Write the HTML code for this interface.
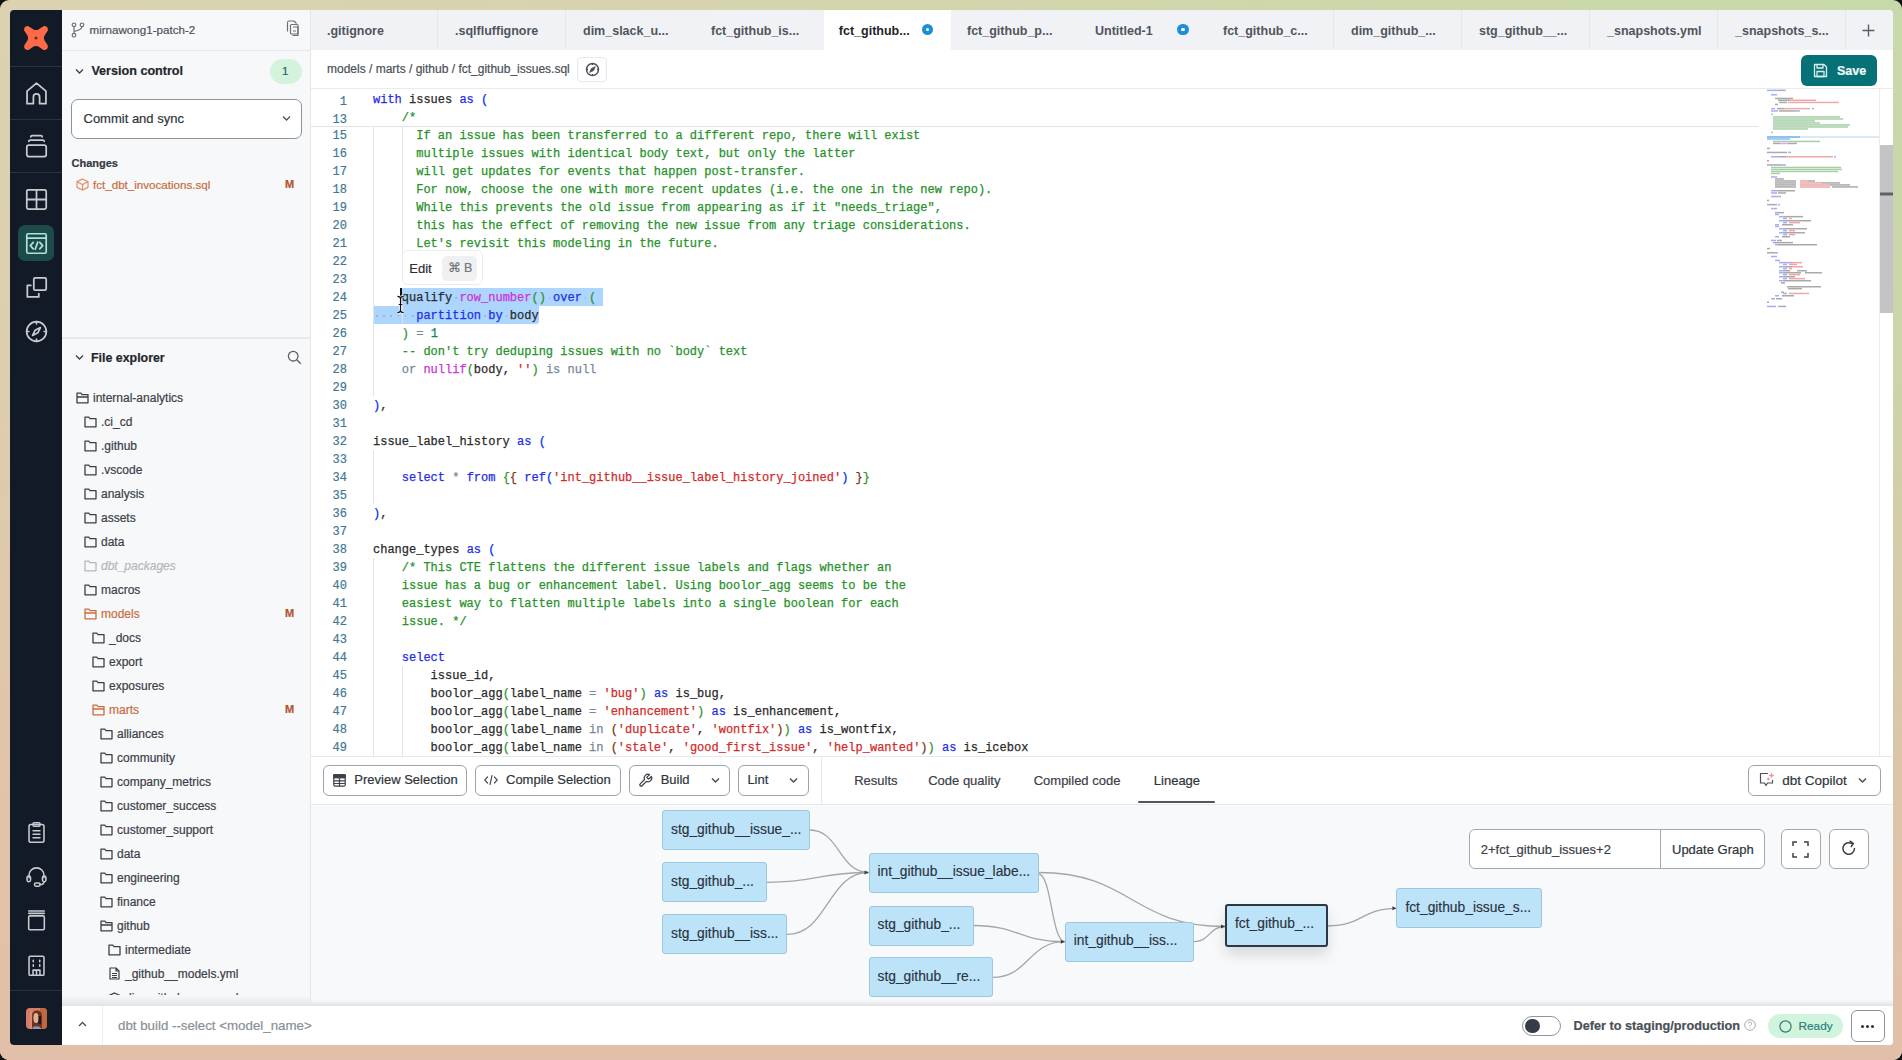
<!DOCTYPE html>
<html><head><meta charset="utf-8">
<style>
*{box-sizing:border-box;margin:0;padding:0}
html,body{width:1902px;height:1060px;overflow:hidden;background:#111}
body{font-family:"Liberation Sans",sans-serif;position:relative}
#bg{position:absolute;left:0;top:0;width:1902px;height:1060px;border-radius:9px;background:linear-gradient(90deg,#dbd2b1 0%,#d3d5ad 50%,#c7d9ab 100%)}
#bg2{position:absolute;left:0;top:0;width:1902px;height:1060px;border-radius:9px;background:linear-gradient(180deg,rgba(226,191,169,0) 0%,rgba(226,191,169,0.15) 30%,rgba(226,191,169,0.75) 70%,rgba(226,191,169,1) 100%)}
#win{position:absolute;left:10px;top:10px;width:1883px;height:1035px;border-radius:4px;overflow:hidden;background:#fff}
.abs{position:absolute}
#nav{left:0;top:0;width:52px;height:1035px;background:#121a27}
.navsep{position:absolute;left:0;width:52px;height:1px;background:#283241}
.nicon{position:absolute;left:12.5px;width:27px;height:27px}
#lp{left:52px;top:0;width:248px;height:995px;background:#f7f8fa}
.t{position:absolute;white-space:pre;line-height:1;-webkit-text-stroke:0.2px currentColor}
#tabs{left:300px;top:0;width:1583px;height:41px;background:#f1f2f5;border-bottom:1px solid #e6e8eb}
.tab{position:absolute;top:0;width:128px;height:40px;font-weight:bold;font-size:12.5px;color:#50555d}
.tab span{position:absolute;left:17px;top:13.5px;white-space:pre}
#crumb{left:300px;top:40px;width:1583px;height:39px;background:#fff;border-bottom:1px solid #e9ebee}
#editor{left:300px;top:79px;width:1583px;height:667px;background:#fff;overflow:hidden}
.ln{position:absolute;left:0;width:37px;text-align:right;font:12px/18px "Liberation Mono",monospace;color:#3f7896;-webkit-text-stroke:0.2px currentColor;margin-top:1px}
.cl{position:absolute;left:63px;font:12px/18px "Liberation Mono",monospace;white-space:pre;color:#2a2a2a;-webkit-text-stroke:0.25px currentColor;margin-top:1px}
.k{color:#1f2ee6}.c{color:#27922a}.o{color:#778899}.p{color:#cc33d6}.s{color:#d12b2b}.n{color:#098658}
.b1{color:#0431fa}.b2{color:#319331}.b3{color:#7b3814}
#tool{z-index:2;left:300px;top:746px;width:1583px;height:49px;background:#fff;border-top:1px solid #e6e8eb;border-bottom:1px solid #e6e8eb}
.btn{position:absolute;top:7.5px;height:31.5px;border:1.5px solid #9ea3aa;border-radius:6px;background:#fff;font-size:13px;color:#2f343b}
#graph{left:300px;top:794px;width:1583px;height:201px;background:#f8f9fb}
.node{position:absolute;height:40px;background:#bde3f8;border:1px solid #9dc6df;border-radius:3px;font-size:13.8px;color:#2a3340}
.node span{position:absolute;left:8px;top:10.5px;white-space:pre;-webkit-text-stroke:0.15px currentColor}
#status{left:52px;top:995px;width:1831px;height:40px;background:#fff;border-top:1px solid #e2e4e8}
</style></head><body>
<div id="bg"></div><div id="bg2"></div>
<div id="win">
 <!-- NAV -->
 <div id="nav" class="abs">
  <svg class="abs" style="left:13px;top:15px" width="26" height="26" viewBox="0 0 24 24"><path fill="#fd6a48" d="M22.1,1.9 C22.7,2.5 23,3.3 23,4.1 C23,4.7 22.8,5.3 22.5,5.8 L19.9,9.8 C19.5,10.5 19.3,11.2 19.3,12 C19.3,12.8 19.5,13.5 19.9,14.2 L22.5,18.2 C22.8,18.7 23,19.3 23,19.9 C23,20.7 22.7,21.5 22.1,22.1 C21.5,22.7 20.7,23 19.9,23 C19.3,23 18.7,22.8 18.2,22.5 L14.2,19.9 C13.5,19.5 12.8,19.3 12,19.3 C11.2,19.3 10.5,19.5 9.8,19.9 L5.8,22.5 C5.3,22.8 4.7,23 4.1,23 C3.3,23 2.5,22.7 1.9,22.1 C1.3,21.5 1,20.7 1,19.9 C1,19.3 1.2,18.7 1.5,18.2 L4.1,14.2 C4.5,13.5 4.7,12.8 4.7,12 C4.7,11.2 4.5,10.5 4.1,9.8 L1.5,5.8 C1.2,5.3 1,4.7 1,4.1 C1,3.3 1.3,2.5 1.9,1.9 C2.5,1.3 3.3,1 4.1,1 C4.7,1 5.3,1.2 5.8,1.5 L9.8,4.1 C10.5,4.5 11.2,4.7 12,4.7 C12.8,4.7 13.5,4.5 14.2,4.1 L18.2,1.5 C18.7,1.2 19.3,1 19.9,1 C20.7,1 21.5,1.3 22.1,1.9 Z"/><circle cx="12" cy="12" r="1.4" fill="#6b2a1a"/></svg>
  <div class="navsep" style="top:56px"></div>
  <div class="navsep" style="top:109px"></div>
  <div class="navsep" style="top:162px"></div>
  <div class="navsep" style="top:980px"></div>
  <svg class="nicon" style="top:69.5px" viewBox="0 0 20 20" fill="none" stroke="#c8cbd0" stroke-width="1.3" stroke-linejoin="round"><path d="M3,17.5 V8.2 L10,2.3 L17,8.2 V17.5 H12.3 V12.5 A2.3,2.3 0 0 0 7.7,12.5 V17.5 Z"/></svg>
  <svg class="nicon" style="top:122.5px" viewBox="0 0 20 20" fill="none" stroke="#c8cbd0" stroke-width="1.3" stroke-linecap="round"><rect x="2.8" y="9" width="14.4" height="8.5" rx="1.5"/><path d="M4.3,6.2 Q4.3,5.2 5.5,5.2 H14.5 Q15.7,5.2 15.7,6.2"/><path d="M5.8,2.8 Q5.8,1.9 6.8,1.9 H13.2 Q14.2,1.9 14.2,2.8"/></svg>
  <svg class="nicon" style="top:175.5px" viewBox="0 0 20 20" fill="none" stroke="#c8cbd0" stroke-width="1.3"><rect x="2.8" y="2.8" width="14.4" height="14.4" rx="1.2"/><path d="M10,2.8 V17.2 M2.8,10 H17.2"/></svg>
  <div class="abs" style="left:8px;top:215px;width:36px;height:36px;border-radius:7px;background:#1d4b4b"></div>
  <svg class="nicon" style="top:219.5px" viewBox="0 0 20 20" fill="none" stroke="#aee3dc" stroke-width="1.25" stroke-linecap="round" stroke-linejoin="round"><rect x="2.8" y="2.8" width="14.4" height="14.4" rx="1"/><path d="M2.8,6 H17.2"/><path d="M7.6,9.2 L5.4,11.6 L7.6,14 M12.4,9.2 L14.6,11.6 L12.4,14 M10.9,9 L9.1,14.2"/></svg>
  <svg class="nicon" style="top:263.5px" viewBox="0 0 20 20" fill="none" stroke="#c8cbd0" stroke-width="1.3" stroke-linecap="round" stroke-linejoin="round"><rect x="8" y="2.8" width="9.2" height="9.2" rx="1"/><path d="M5.8,8.5 H3.2 V17 H11.7 V14.6"/></svg>
  <svg class="nicon" style="top:307.5px" viewBox="0 0 20 20" fill="none" stroke="#c8cbd0" stroke-width="1.25" stroke-linecap="round" stroke-linejoin="round"><circle cx="10" cy="10" r="7.3"/><path d="M10,2.7 V4.3 M10,15.7 V17.3 M2.7,10 H4.3 M15.7,10 H17.3"/><path d="M12.9,7.1 L11,11 L7.1,12.9 L9,9 Z"/></svg>
  <svg class="nicon" style="top:810.5px;left:14.5px;width:23px;height:23px" viewBox="0 0 20 20" fill="none" stroke="#c8cbd0" stroke-width="1.35" stroke-linecap="round" stroke-linejoin="round"><rect x="3.5" y="3" width="13" height="15.5" rx="1.5"/><rect x="7" y="1.5" width="6" height="3" rx="0.8"/><path d="M7,8.5 H13 M7,11.5 H13 M7,14.5 H13"/></svg>
  <svg class="nicon" style="top:854.5px;left:14.5px;width:23px;height:23px" viewBox="0 0 20 20" fill="none" stroke="#c8cbd0" stroke-width="1.35" stroke-linecap="round" stroke-linejoin="round"><path d="M3.5,11 V9 A6.5,6.5 0 0 1 16.5,9 V11"/><rect x="1.8" y="9.5" width="3" height="5" rx="1.4"/><rect x="15.2" y="9.5" width="3" height="5" rx="1.4"/><path d="M16.5,14.5 Q16.5,17 13,17"/><rect x="8.2" y="15.6" width="5" height="2.8" rx="1.4"/></svg>
  <svg class="nicon" style="top:898.5px;left:14.5px;width:23px;height:23px" viewBox="0 0 20 20" fill="none" stroke="#c8cbd0" stroke-width="1.35" stroke-linecap="round" stroke-linejoin="round"><rect x="3.2" y="6" width="13.6" height="12" rx="1"/><path d="M3.2,3.8 H16.8 M3.2,1.8 H16.8"/></svg>
  <svg class="nicon" style="top:943.5px;left:14.5px;width:23px;height:23px" viewBox="0 0 20 20" fill="none" stroke="#c8cbd0" stroke-width="1.35" stroke-linecap="round" stroke-linejoin="round"><rect x="3.5" y="2" width="13" height="16.5" rx="1"/><path d="M7.2,5.5 V6.8 M12.8,5.5 V6.8 M7.2,9.3 V10.6 M12.8,9.3 V10.6"/><path d="M7,18.5 V14 H13 V18.5 M10,14 V18.5"/></svg>
  <svg class="abs" style="left:15.7px;top:998.2px" width="21" height="21" viewBox="0 0 21 21"><defs><clipPath id="avc"><rect x="0" y="0" width="21" height="21" rx="4"/></clipPath></defs><g clip-path="url(#avc)">
<rect width="21" height="21" fill="#d47e66"/><rect x="14" width="7" height="21" fill="#c2683e"/>
<path d="M6,21 V8 Q6,2.5 11,2.5 Q16,2.5 16,8 V21 Z" fill="#6a3422"/>
<ellipse cx="10" cy="10" rx="2.6" ry="5" fill="#e3b192"/>
<rect x="12.6" y="8" width="2.4" height="8" fill="#1c1a26"/>
<path d="M6,21 Q7,17.5 10,18.5 Q13,17.5 16,21 Z" fill="#8e9aa8"/>
<rect x="4" y="2" width="2" height="19" fill="#e08a74"/>
</g></svg>
 </div>
 <!-- LEFT PANEL -->
 <div id="lp" class="abs">
  <div class="abs" style="left:0;top:0;width:248px;height:41px;border-bottom:1px solid #e6e8eb"></div>
  <svg class="abs" style="left:9px;top:12px" width="14" height="16" viewBox="0 0 14 16" fill="none" stroke="#6b7079" stroke-width="1.2"><circle cx="3" cy="2.8" r="1.8"/><circle cx="3" cy="13.2" r="1.8"/><circle cx="11" cy="2.8" r="1.8"/><path d="M3,4.6 V11.4 M11,4.6 Q11,8 3,9.5"/></svg>
  <div class="t" style="left:27.5px;top:13.5px;font-size:11.6px;color:#4d525a">mirnawong1-patch-2</div>
  <svg class="abs" style="left:224px;top:10px" width="16" height="17" viewBox="0 0 16 17" fill="none" stroke="#6b7079" stroke-width="1.2" stroke-linejoin="round"><path d="M1.5,2.5 Q1.5,1 3,1 H8 L10.5,3.5"/><path d="M1.5,2.5 V11.5"/><rect x="4.5" y="4.5" width="7.5" height="9.5" rx="1"/><path d="M7,7 H12 V15.5 H6.5"/><path d="M7,11 H10"/></svg>
  <svg class="abs" style="left:13px;top:58px" width="9" height="7" viewBox="0 0 9 7" fill="none" stroke="#3b4048" stroke-width="1.3"><path d="M1,1.5 L4.5,5 L8,1.5"/></svg>
  <div class="t" style="left:29.4px;top:55px;font-size:12.6px;font-weight:bold;color:#23272d">Version control</div>
  <div class="abs" style="left:207.5px;top:48.5px;width:32.5px;height:25px;border-radius:13px;background:#d3f3dd"></div>
  <div class="t" style="left:220px;top:55.5px;font-size:11.5px;color:#26666a">1</div>
  <div class="abs" style="left:9px;top:88.5px;width:231px;height:40px;border:1.5px solid #8f949b;border-radius:7px;background:#fff"></div>
  <div class="t" style="left:21.5px;top:101.5px;font-size:13px;color:#30353c">Commit and sync</div>
  <svg class="abs" style="left:220px;top:105px" width="9" height="7" viewBox="0 0 9 7" fill="none" stroke="#4b5058" stroke-width="1.3"><path d="M1,1.5 L4.5,5 L8,1.5"/></svg>
  <div class="t" style="left:9.5px;top:147.5px;font-size:11px;font-weight:bold;color:#353a41">Changes</div>
  <svg class="abs" style="left:14px;top:168px" width="13" height="13" viewBox="0 0 13 13" fill="none" stroke="#e29063" stroke-width="1.2"><path d="M6.5,1 L12,3.7 V9.3 L6.5,12 L1,9.3 V3.7 Z M1,3.7 L6.5,6.5 L12,3.7 M6.5,6.5 V12"/></svg>
  <div class="t" style="left:31px;top:168.5px;font-size:11.6px;color:#c96c3e">fct_dbt_invocations.sql</div>
  <div class="t" style="left:223px;top:169px;font-size:11px;font-weight:bold;color:#b5532a">M</div>
  <div class="abs" style="left:0;top:327px;width:248px;height:1.5px;background:#e8eaed"></div>
  <svg class="abs" style="left:13px;top:344px" width="9" height="7" viewBox="0 0 9 7" fill="none" stroke="#3b4048" stroke-width="1.3"><path d="M1,1.5 L4.5,5 L8,1.5"/></svg>
  <div class="t" style="left:29px;top:341.5px;font-size:12.4px;font-weight:bold;color:#23272d">File explorer</div>
  <svg class="abs" style="left:225px;top:340px" width="15" height="15" viewBox="0 0 15 15" fill="none" stroke="#5b6068" stroke-width="1.3"><circle cx="6.2" cy="6.2" r="4.8"/><path d="M9.7,9.7 L13.8,13.8"/></svg>
  <div class="abs" style="left:0;top:0;width:248px;height:984.5px;overflow:hidden">
<svg class="abs" style="left:13.5px;top:382px" width="13" height="12" viewBox="0 0 13 12" fill="none" stroke="#3b4048" stroke-width="1.3" stroke-linejoin="round"><path d="M1,1.2 H4.8 L6,2.6 H12 V10.8 H1 Z M1,5 H12"/></svg>
<div class="t" style="left:31px;top:381.5px;font-size:12px;color:#3b4048;">internal-analytics</div>
<svg class="abs" style="left:21.5px;top:406px" width="13" height="12" viewBox="0 0 13 12" fill="none" stroke="#3b4048" stroke-width="1.3" stroke-linejoin="round"><path d="M1,1.2 H4.8 L6,2.6 H12 V10.8 H1 Z"/></svg>
<div class="t" style="left:39px;top:405.5px;font-size:12px;color:#3b4048;">.ci_cd</div>
<svg class="abs" style="left:21.5px;top:430px" width="13" height="12" viewBox="0 0 13 12" fill="none" stroke="#3b4048" stroke-width="1.3" stroke-linejoin="round"><path d="M1,1.2 H4.8 L6,2.6 H12 V10.8 H1 Z"/></svg>
<div class="t" style="left:39px;top:429.5px;font-size:12px;color:#3b4048;">.github</div>
<svg class="abs" style="left:21.5px;top:454px" width="13" height="12" viewBox="0 0 13 12" fill="none" stroke="#3b4048" stroke-width="1.3" stroke-linejoin="round"><path d="M1,1.2 H4.8 L6,2.6 H12 V10.8 H1 Z"/></svg>
<div class="t" style="left:39px;top:453.5px;font-size:12px;color:#3b4048;">.vscode</div>
<svg class="abs" style="left:21.5px;top:478px" width="13" height="12" viewBox="0 0 13 12" fill="none" stroke="#3b4048" stroke-width="1.3" stroke-linejoin="round"><path d="M1,1.2 H4.8 L6,2.6 H12 V10.8 H1 Z"/></svg>
<div class="t" style="left:39px;top:477.5px;font-size:12px;color:#3b4048;">analysis</div>
<svg class="abs" style="left:21.5px;top:502px" width="13" height="12" viewBox="0 0 13 12" fill="none" stroke="#3b4048" stroke-width="1.3" stroke-linejoin="round"><path d="M1,1.2 H4.8 L6,2.6 H12 V10.8 H1 Z"/></svg>
<div class="t" style="left:39px;top:501.5px;font-size:12px;color:#3b4048;">assets</div>
<svg class="abs" style="left:21.5px;top:526px" width="13" height="12" viewBox="0 0 13 12" fill="none" stroke="#3b4048" stroke-width="1.3" stroke-linejoin="round"><path d="M1,1.2 H4.8 L6,2.6 H12 V10.8 H1 Z"/></svg>
<div class="t" style="left:39px;top:525.5px;font-size:12px;color:#3b4048;">data</div>
<svg class="abs" style="left:21.5px;top:550px" width="13" height="12" viewBox="0 0 13 12" fill="none" stroke="#b3b7bd" stroke-width="1.3" stroke-linejoin="round"><path d="M1,1.2 H4.8 L6,2.6 H12 V10.8 H1 Z"/></svg>
<div class="t" style="left:39px;top:549.5px;font-size:12px;color:#b3b7bd;font-style:italic;">dbt_packages</div>
<svg class="abs" style="left:21.5px;top:574px" width="13" height="12" viewBox="0 0 13 12" fill="none" stroke="#3b4048" stroke-width="1.3" stroke-linejoin="round"><path d="M1,1.2 H4.8 L6,2.6 H12 V10.8 H1 Z"/></svg>
<div class="t" style="left:39px;top:573.5px;font-size:12px;color:#3b4048;">macros</div>
<svg class="abs" style="left:21.5px;top:598px" width="13" height="12" viewBox="0 0 13 12" fill="none" stroke="#c96c3e" stroke-width="1.3" stroke-linejoin="round"><path d="M1,1.2 H4.8 L6,2.6 H12 V10.8 H1 Z M1,5 H12"/></svg>
<div class="t" style="left:39px;top:597.5px;font-size:12px;color:#c96c3e;">models</div>
<div class="t" style="left:223px;top:598px;font-size:11px;font-weight:bold;color:#b5532a">M</div>
<svg class="abs" style="left:29.5px;top:622px" width="13" height="12" viewBox="0 0 13 12" fill="none" stroke="#3b4048" stroke-width="1.3" stroke-linejoin="round"><path d="M1,1.2 H4.8 L6,2.6 H12 V10.8 H1 Z"/></svg>
<div class="t" style="left:47px;top:621.5px;font-size:12px;color:#3b4048;">_docs</div>
<svg class="abs" style="left:29.5px;top:646px" width="13" height="12" viewBox="0 0 13 12" fill="none" stroke="#3b4048" stroke-width="1.3" stroke-linejoin="round"><path d="M1,1.2 H4.8 L6,2.6 H12 V10.8 H1 Z"/></svg>
<div class="t" style="left:47px;top:645.5px;font-size:12px;color:#3b4048;">export</div>
<svg class="abs" style="left:29.5px;top:670px" width="13" height="12" viewBox="0 0 13 12" fill="none" stroke="#3b4048" stroke-width="1.3" stroke-linejoin="round"><path d="M1,1.2 H4.8 L6,2.6 H12 V10.8 H1 Z"/></svg>
<div class="t" style="left:47px;top:669.5px;font-size:12px;color:#3b4048;">exposures</div>
<svg class="abs" style="left:29.5px;top:694px" width="13" height="12" viewBox="0 0 13 12" fill="none" stroke="#c96c3e" stroke-width="1.3" stroke-linejoin="round"><path d="M1,1.2 H4.8 L6,2.6 H12 V10.8 H1 Z M1,5 H12"/></svg>
<div class="t" style="left:47px;top:693.5px;font-size:12px;color:#c96c3e;">marts</div>
<div class="t" style="left:223px;top:694px;font-size:11px;font-weight:bold;color:#b5532a">M</div>
<svg class="abs" style="left:37.5px;top:718px" width="13" height="12" viewBox="0 0 13 12" fill="none" stroke="#3b4048" stroke-width="1.3" stroke-linejoin="round"><path d="M1,1.2 H4.8 L6,2.6 H12 V10.8 H1 Z"/></svg>
<div class="t" style="left:55px;top:717.5px;font-size:12px;color:#3b4048;">alliances</div>
<svg class="abs" style="left:37.5px;top:742px" width="13" height="12" viewBox="0 0 13 12" fill="none" stroke="#3b4048" stroke-width="1.3" stroke-linejoin="round"><path d="M1,1.2 H4.8 L6,2.6 H12 V10.8 H1 Z"/></svg>
<div class="t" style="left:55px;top:741.5px;font-size:12px;color:#3b4048;">community</div>
<svg class="abs" style="left:37.5px;top:766px" width="13" height="12" viewBox="0 0 13 12" fill="none" stroke="#3b4048" stroke-width="1.3" stroke-linejoin="round"><path d="M1,1.2 H4.8 L6,2.6 H12 V10.8 H1 Z"/></svg>
<div class="t" style="left:55px;top:765.5px;font-size:12px;color:#3b4048;">company_metrics</div>
<svg class="abs" style="left:37.5px;top:790px" width="13" height="12" viewBox="0 0 13 12" fill="none" stroke="#3b4048" stroke-width="1.3" stroke-linejoin="round"><path d="M1,1.2 H4.8 L6,2.6 H12 V10.8 H1 Z"/></svg>
<div class="t" style="left:55px;top:789.5px;font-size:12px;color:#3b4048;">customer_success</div>
<svg class="abs" style="left:37.5px;top:814px" width="13" height="12" viewBox="0 0 13 12" fill="none" stroke="#3b4048" stroke-width="1.3" stroke-linejoin="round"><path d="M1,1.2 H4.8 L6,2.6 H12 V10.8 H1 Z"/></svg>
<div class="t" style="left:55px;top:813.5px;font-size:12px;color:#3b4048;">customer_support</div>
<svg class="abs" style="left:37.5px;top:838px" width="13" height="12" viewBox="0 0 13 12" fill="none" stroke="#3b4048" stroke-width="1.3" stroke-linejoin="round"><path d="M1,1.2 H4.8 L6,2.6 H12 V10.8 H1 Z"/></svg>
<div class="t" style="left:55px;top:837.5px;font-size:12px;color:#3b4048;">data</div>
<svg class="abs" style="left:37.5px;top:862px" width="13" height="12" viewBox="0 0 13 12" fill="none" stroke="#3b4048" stroke-width="1.3" stroke-linejoin="round"><path d="M1,1.2 H4.8 L6,2.6 H12 V10.8 H1 Z"/></svg>
<div class="t" style="left:55px;top:861.5px;font-size:12px;color:#3b4048;">engineering</div>
<svg class="abs" style="left:37.5px;top:886px" width="13" height="12" viewBox="0 0 13 12" fill="none" stroke="#3b4048" stroke-width="1.3" stroke-linejoin="round"><path d="M1,1.2 H4.8 L6,2.6 H12 V10.8 H1 Z"/></svg>
<div class="t" style="left:55px;top:885.5px;font-size:12px;color:#3b4048;">finance</div>
<svg class="abs" style="left:37.5px;top:910px" width="13" height="12" viewBox="0 0 13 12" fill="none" stroke="#3b4048" stroke-width="1.3" stroke-linejoin="round"><path d="M1,1.2 H4.8 L6,2.6 H12 V10.8 H1 Z M1,5 H12"/></svg>
<div class="t" style="left:55px;top:909.5px;font-size:12px;color:#3b4048;">github</div>
<svg class="abs" style="left:45.5px;top:934px" width="13" height="12" viewBox="0 0 13 12" fill="none" stroke="#3b4048" stroke-width="1.3" stroke-linejoin="round"><path d="M1,1.2 H4.8 L6,2.6 H12 V10.8 H1 Z"/></svg>
<div class="t" style="left:63px;top:933.5px;font-size:12px;color:#3b4048;">intermediate</div>
<svg class="abs" style="left:46.5px;top:957px" width="11" height="13" viewBox="0 0 11 13" fill="none" stroke="#3b4048" stroke-width="1.2" stroke-linejoin="round"><path d="M1,1 H7 L10,4 V12 H1 Z M7,1 V4 H10"/><path d="M3,6.5 H8 M3,8.5 H8 M3,10.5 H8" stroke-width="1"/></svg>
<div class="t" style="left:63px;top:957.5px;font-size:12px;color:#3b4048;">_github__models.yml</div>
<svg class="abs" style="left:45.5px;top:982px" width="13" height="12" viewBox="0 0 13 12" fill="none" stroke="#3b4048" stroke-width="1.3"><path d="M6.5,1 L12,3.5 V8.5 L6.5,11 L1,8.5 V3.5 Z M1,3.5 L6.5,6 L12,3.5 M6.5,6 V11"/></svg>
<div class="t" style="left:63px;top:981.5px;font-size:12px;color:#3b4048;">dim_github_users.sql</div>
  </div>
  <div class="abs" style="left:0;top:985.5px;width:248px;height:9.5px;background:linear-gradient(#f7f8fa,#e3e5e9)"></div>
 </div>
 <!-- TABS -->
 <div id="tabs" class="abs"><div class="abs" style="left:127px;top:0;width:1px;height:40px;background:#e4e6ea"></div><div class="abs" style="left:255px;top:0;width:1px;height:40px;background:#e4e6ea"></div><div class="abs" style="left:1023px;top:0;width:1px;height:40px;background:#e4e6ea"></div><div class="abs" style="left:1151px;top:0;width:1px;height:40px;background:#e4e6ea"></div><div class="abs" style="left:1279px;top:0;width:1px;height:40px;background:#e4e6ea"></div><div class="abs" style="left:1407px;top:0;width:1px;height:40px;background:#e4e6ea"></div><div class="abs" style="left:1535px;top:0;width:1px;height:40px;background:#e4e6ea"></div><div class="tab" style="left:0px"><span>.gitignore</span></div>
<div class="tab" style="left:128px"><span>.sqlfluffignore</span></div>
<div class="tab" style="left:256px"><span>dim_slack_u...</span></div>
<div class="tab" style="left:384px"><span>fct_github_is...</span></div>
<div class="tab" style="left:514px;width:127px;background:#fff;color:#1f2329;height:41px"><span style="left:14.8px">fct_github...</span></div>
<div class="tab" style="left:640px"><span>fct_github_p...</span></div>
<div class="tab" style="left:768px"><span>Untitled-1</span></div>
<div class="tab" style="left:896px"><span>fct_github_c...</span></div>
<div class="tab" style="left:1024px"><span>dim_github_...</span></div>
<div class="tab" style="left:1152px"><span>stg_github__...</span></div>
<div class="tab" style="left:1280px"><span>_snapshots.yml</span></div>
<div class="tab" style="left:1408px"><span>_snapshots_s...</span></div>
<div class="abs" style="left:611.5px;top:13.5px;width:11.5px;height:11.5px;border-radius:50%;border:4px solid #1d8fd6;background:#fff"></div>
<div class="abs" style="left:867.2px;top:13.5px;width:11.5px;height:11.5px;border-radius:50%;border:4px solid #1d8fd6;background:#fff"></div>
<svg class="abs" style="left:1552px;top:14px" width="13" height="13" viewBox="0 0 13 13" stroke="#5a5f67" stroke-width="1.4"><path d="M6.5,0.5 V12.5 M0.5,6.5 H12.5"/></svg>
 </div>
 <div id="crumb" class="abs">
  <div class="t" style="left:17px;top:13px;font-size:12px;color:#4a4f57">models / marts / github / fct_github_issues.sql</div>
  <div class="abs" style="left:267px;top:7px;width:30px;height:25px;border:1px solid #e6e8eb;border-radius:4px;background:#fff"></div>
  <svg class="abs" style="left:275px;top:12px" width="15" height="15" viewBox="0 0 15 15" fill="none" stroke="#4d525a" stroke-width="1.5"><circle cx="7.5" cy="7.5" r="6"/><path d="M7.5,1.5 V3 M7.5,12 V13.5 M1.5,7.5 H3 M12,7.5 H13.5" stroke-width="1.3"/><path d="M10.3,4.7 L8.6,8.6 L4.7,10.3 L6.4,6.4 Z" fill="#4d525a" stroke-width="0.8"/></svg>
  <div class="abs" style="left:1491px;top:4.5px;width:76px;height:31.5px;border-radius:6px;background:#067277"></div>
  <svg class="abs" style="left:1503px;top:12.5px" width="15" height="15" viewBox="0 0 15 15" fill="none" stroke="#d9f0ef" stroke-width="1.3" stroke-linejoin="round"><path d="M1.5,1.5 H11 L13.5,4 V13.5 H1.5 Z"/><path d="M4,1.5 V5 H10 V1.5"/><rect x="4" y="8.5" width="7" height="5"/></svg>
  <div class="t" style="left:1527px;top:14.5px;font-size:12.5px;font-weight:bold;color:#f2fbfb">Save</div>
 </div>
 <div id="editor" class="abs">
<div class="abs" style="left:90.8px;top:199px;width:202.6px;height:18px;background:#add6ff"></div>
<div class="abs" style="left:63.0px;top:217px;width:165.6px;height:18px;background:#add6ff;border-radius:0 0 3px 0"></div>
<div class="abs" style="left:63.0px;top:37px;width:1px;height:270px;background:#e3e3e3"></div>
<div class="abs" style="left:91.8px;top:37px;width:1px;height:144px;background:#e3e3e3"></div>
<div class="abs" style="left:91.8px;top:217px;width:1px;height:18px;background:#e3e3e3"></div>
<div class="abs" style="left:63.0px;top:361px;width:1px;height:54px;background:#e3e3e3"></div>
<div class="abs" style="left:63.0px;top:469px;width:1px;height:198px;background:#e3e3e3"></div>
<div class="abs" style="left:91.8px;top:577px;width:1px;height:90px;background:#e3e3e3"></div>
<div class="abs" style="left:66.0px;top:226px;width:1.5px;height:1.5px;background:#9cb8d6"></div>
<div class="abs" style="left:73.2px;top:226px;width:1.5px;height:1.5px;background:#9cb8d6"></div>
<div class="abs" style="left:80.4px;top:226px;width:1.5px;height:1.5px;background:#9cb8d6"></div>
<div class="abs" style="left:87.6px;top:226px;width:1.5px;height:1.5px;background:#9cb8d6"></div>
<div class="abs" style="left:94.8px;top:226px;width:1.5px;height:1.5px;background:#9cb8d6"></div>
<div class="abs" style="left:102.0px;top:226px;width:1.5px;height:1.5px;background:#9cb8d6"></div>
<div class="abs" style="left:145.2px;top:208px;width:1.5px;height:1.5px;background:#9cb8d6"></div><div class="abs" style="left:238.8px;top:208px;width:1.5px;height:1.5px;background:#9cb8d6"></div><div class="abs" style="left:274.8px;top:208px;width:1.5px;height:1.5px;background:#9cb8d6"></div><div class="abs" style="left:174.0px;top:226px;width:1.5px;height:1.5px;background:#9cb8d6"></div><div class="abs" style="left:195.6px;top:226px;width:1.5px;height:1.5px;background:#9cb8d6"></div><div class="ln" style="top:37px">15</div>
<div class="cl" style="top:37px"><span class="c">      If an issue has been transferred to a different repo, there will exist</span></div>
<div class="ln" style="top:55px">16</div>
<div class="cl" style="top:55px"><span class="c">      multiple issues with identical body text, but only the latter</span></div>
<div class="ln" style="top:73px">17</div>
<div class="cl" style="top:73px"><span class="c">      will get updates for events that happen post-transfer.</span></div>
<div class="ln" style="top:91px">18</div>
<div class="cl" style="top:91px"><span class="c">      For now, choose the one with more recent updates (i.e. the one in the new repo).</span></div>
<div class="ln" style="top:109px">19</div>
<div class="cl" style="top:109px"><span class="c">      While this prevents the old issue from appearing as if it &quot;needs_triage&quot;,</span></div>
<div class="ln" style="top:127px">20</div>
<div class="cl" style="top:127px"><span class="c">      this has the effect of removing the new issue from any triage considerations.</span></div>
<div class="ln" style="top:145px">21</div>
<div class="cl" style="top:145px"><span class="c">      Let&#x27;s revisit this modeling in the future.</span></div>
<div class="ln" style="top:163px">22</div>
<div class="cl" style="top:163px"><span class="c">    */</span></div>
<div class="ln" style="top:181px">23</div>
<div class="ln" style="top:199px">24</div>
<div class="cl" style="top:199px">    qualify <span class="p">row_number</span><span class="b2">()</span> <span class="k">over</span> <span class="b2">(</span></div>
<div class="ln" style="top:217px">25</div>
<div class="cl" style="top:217px">      <span class="k">partition</span> <span class="k">by</span> body</div>
<div class="ln" style="top:235px">26</div>
<div class="cl" style="top:235px">    <span class="b2">)</span> <span class="o">=</span> <span class="n">1</span></div>
<div class="ln" style="top:253px">27</div>
<div class="cl" style="top:253px">    <span class="c">-- don&#x27;t try deduping issues with no `body` text</span></div>
<div class="ln" style="top:271px">28</div>
<div class="cl" style="top:271px">    <span class="o">or</span> <span class="p">nullif</span><span class="b2">(</span>body, <span class="s">&#x27;&#x27;</span><span class="b2">)</span> <span class="o">is</span> <span class="o">null</span></div>
<div class="ln" style="top:289px">29</div>
<div class="ln" style="top:307px">30</div>
<div class="cl" style="top:307px"><span class="b1">)</span>,</div>
<div class="ln" style="top:325px">31</div>
<div class="ln" style="top:343px">32</div>
<div class="cl" style="top:343px">issue_label_history <span class="k">as</span> <span class="b1">(</span></div>
<div class="ln" style="top:361px">33</div>
<div class="ln" style="top:379px">34</div>
<div class="cl" style="top:379px">    <span class="k">select</span> <span class="o">*</span> <span class="k">from</span> <span class="b2">{</span><span class="b3">{</span> <span class="k">ref</span><span class="b1">(</span><span class="s">&#x27;int_github__issue_label_history_joined&#x27;</span><span class="b1">)</span> <span class="b3">}</span><span class="b2">}</span></div>
<div class="ln" style="top:397px">35</div>
<div class="ln" style="top:415px">36</div>
<div class="cl" style="top:415px"><span class="b1">)</span>,</div>
<div class="ln" style="top:433px">37</div>
<div class="ln" style="top:451px">38</div>
<div class="cl" style="top:451px">change_types <span class="k">as</span> <span class="b1">(</span></div>
<div class="ln" style="top:469px">39</div>
<div class="cl" style="top:469px">    <span class="c">/* This CTE flattens the different issue labels and flags whether an</span></div>
<div class="ln" style="top:487px">40</div>
<div class="cl" style="top:487px">    <span class="c">issue has a bug or enhancement label. Using boolor_agg seems to be the</span></div>
<div class="ln" style="top:505px">41</div>
<div class="cl" style="top:505px">    <span class="c">easiest way to flatten multiple labels into a single boolean for each</span></div>
<div class="ln" style="top:523px">42</div>
<div class="cl" style="top:523px">    <span class="c">issue. */</span></div>
<div class="ln" style="top:541px">43</div>
<div class="ln" style="top:559px">44</div>
<div class="cl" style="top:559px">    <span class="k">select</span></div>
<div class="ln" style="top:577px">45</div>
<div class="cl" style="top:577px">        issue_id,</div>
<div class="ln" style="top:595px">46</div>
<div class="cl" style="top:595px">        boolor_agg<span class="b2">(</span>label_name <span class="o">=</span> <span class="s">&#x27;bug&#x27;</span><span class="b2">)</span> <span class="k">as</span> is_bug,</div>
<div class="ln" style="top:613px">47</div>
<div class="cl" style="top:613px">        boolor_agg<span class="b2">(</span>label_name <span class="o">=</span> <span class="s">&#x27;enhancement&#x27;</span><span class="b2">)</span> <span class="k">as</span> is_enhancement,</div>
<div class="ln" style="top:631px">48</div>
<div class="cl" style="top:631px">        boolor_agg<span class="b2">(</span>label_name <span class="o">in</span> <span class="b3">(</span><span class="s">&#x27;duplicate&#x27;</span>, <span class="s">&#x27;wontfix&#x27;</span><span class="b3">)</span><span class="b2">)</span> <span class="k">as</span> is_wontfix,</div>
<div class="ln" style="top:649px">49</div>
<div class="cl" style="top:649px">        boolor_agg<span class="b2">(</span>label_name <span class="o">in</span> <span class="b3">(</span><span class="s">&#x27;stale&#x27;</span>, <span class="s">&#x27;good_first_issue&#x27;</span>, <span class="s">&#x27;help_wanted&#x27;</span><span class="b3">)</span><span class="b2">)</span> <span class="k">as</span> is_icebox</div>
<div class="abs" style="left:1569px;top:0;width:1px;height:667px;background:#ececec"></div>
<svg class="abs" style="left:1450px;top:0" width="133" height="240" viewBox="1760 89 133 240">
<rect x="1767" y="136" width="112" height="2" fill="#dbe9f7"/>
<rect x="1767" y="136" width="33" height="2" fill="#8fc0f0"/><rect x="1767" y="138" width="23" height="2" fill="#a6cdf3"/>
<g opacity="0.5">
<rect x="1767" y="89.6" width="13" height="1.5" fill="#5060e0"/>
<rect x="1780" y="89.6" width="4" height="1.5" fill="#555"/>
<rect x="1784" y="89.6" width="2" height="1.5" fill="#5060e0"/>
<rect x="1771" y="94.0" width="6" height="1.5" fill="#5060e0"/>
<rect x="1775" y="97.7" width="18" height="1.5" fill="#555"/>
<rect x="1778" y="99.5" width="12" height="1.5" fill="#555"/>
<rect x="1789" y="99.5" width="27" height="1.5" fill="#e05050"/>
<rect x="1779" y="101.7" width="8" height="1.5" fill="#555"/>
<rect x="1788" y="101.7" width="12" height="1.5" fill="#e05050"/>
<rect x="1800" y="101.7" width="39" height="1.5" fill="#e05050"/>
<rect x="1775" y="103.7" width="3" height="1.5" fill="#555"/>
<rect x="1771" y="107.9" width="4" height="1.5" fill="#5060e0"/>
<rect x="1777" y="107.9" width="7" height="1.5" fill="#555"/>
<rect x="1784" y="107.9" width="26" height="1.5" fill="#e05050"/>
<rect x="1812" y="107.9" width="2" height="1.5" fill="#5060e0"/>
<rect x="1771" y="110.2" width="7" height="1.5" fill="#5060e0"/>
<rect x="1779" y="110.2" width="16" height="1.5" fill="#555"/>
<rect x="1795" y="110.2" width="5" height="1.5" fill="#5060e0"/>
<rect x="1771" y="113.7" width="2" height="1.5" fill="#50a050"/>
<rect x="1773" y="116.2" width="67" height="1.5" fill="#50a050"/>
<rect x="1773" y="118.2" width="70" height="1.5" fill="#50a050"/>
<rect x="1773" y="120.2" width="42" height="1.5" fill="#50a050"/>
<rect x="1773" y="122.2" width="47" height="1.5" fill="#50a050"/>
<rect x="1773" y="124.2" width="77" height="1.5" fill="#50a050"/>
<rect x="1773" y="126.2" width="75" height="1.5" fill="#50a050"/>
<rect x="1773" y="128.2" width="35" height="1.5" fill="#50a050"/>
<rect x="1771" y="131.7" width="2" height="1.5" fill="#50a050"/>
<rect x="1773" y="140.7" width="47" height="1.5" fill="#50a050"/>
<rect x="1773" y="142.7" width="7" height="1.5" fill="#555"/>
<rect x="1780" y="142.7" width="8" height="1.5" fill="#d050d0"/>
<rect x="1788" y="142.7" width="9" height="1.5" fill="#555"/>
<rect x="1767" y="147.7" width="3" height="1.5" fill="#555"/>
<rect x="1767" y="151.7" width="20" height="1.5" fill="#555"/>
<rect x="1788" y="151.7" width="3" height="1.5" fill="#5060e0"/>
<rect x="1771" y="156.0" width="9" height="1.5" fill="#5060e0"/>
<rect x="1780" y="156.0" width="6" height="1.5" fill="#555"/>
<rect x="1786" y="156.0" width="47" height="1.5" fill="#e05050"/>
<rect x="1834" y="156.0" width="2" height="1.5" fill="#5060e0"/>
<rect x="1767" y="160.0" width="2" height="1.5" fill="#555"/>
<rect x="1767" y="164.2" width="15" height="1.5" fill="#555"/>
<rect x="1782" y="164.2" width="4" height="1.5" fill="#5060e0"/>
<rect x="1771" y="166.7" width="70" height="1.5" fill="#50a050"/>
<rect x="1771" y="168.7" width="71" height="1.5" fill="#50a050"/>
<rect x="1771" y="170.7" width="67" height="1.5" fill="#50a050"/>
<rect x="1771" y="172.7" width="9" height="1.5" fill="#50a050"/>
<rect x="1771" y="176.2" width="6" height="1.5" fill="#5060e0"/>
<rect x="1775" y="178.2" width="9" height="1.5" fill="#555"/>
<rect x="1775" y="180.2" width="21" height="1.5" fill="#555"/>
<rect x="1800" y="180.2" width="8" height="1.5" fill="#e05050"/>
<rect x="1808" y="180.2" width="7" height="1.5" fill="#555"/>
<rect x="1775" y="182.2" width="21" height="1.5" fill="#555"/>
<rect x="1800" y="182.2" width="22" height="1.5" fill="#e05050"/>
<rect x="1822" y="182.2" width="18" height="1.5" fill="#555"/>
<rect x="1775" y="184.2" width="21" height="1.5" fill="#555"/>
<rect x="1800" y="184.2" width="30" height="1.5" fill="#e05050"/>
<rect x="1830" y="184.2" width="20" height="1.5" fill="#555"/>
<rect x="1775" y="186.2" width="21" height="1.5" fill="#555"/>
<rect x="1800" y="186.2" width="30" height="1.5" fill="#e05050"/>
<rect x="1832" y="186.2" width="26" height="1.5" fill="#555"/>
<rect x="1771" y="190.0" width="7" height="1.5" fill="#5060e0"/>
<rect x="1778" y="190.0" width="17" height="1.5" fill="#555"/>
<rect x="1771" y="192.2" width="6" height="1.5" fill="#5060e0"/>
<rect x="1778" y="192.2" width="8" height="1.5" fill="#555"/>
<rect x="1771" y="195.8" width="10" height="1.5" fill="#5060e0"/>
<rect x="1767" y="199.7" width="2" height="1.5" fill="#555"/>
<rect x="1767" y="203.9" width="10" height="1.5" fill="#555"/>
<rect x="1778" y="203.9" width="2" height="1.5" fill="#5060e0"/>
<rect x="1771" y="207.8" width="6" height="1.5" fill="#5060e0"/>
<rect x="1775" y="211.9" width="9" height="1.5" fill="#555"/>
<rect x="1775" y="213.7" width="4" height="1.5" fill="#5060e0"/>
<rect x="1779" y="215.9" width="5" height="1.5" fill="#5060e0"/>
<rect x="1784" y="215.9" width="19" height="1.5" fill="#555"/>
<rect x="1783" y="217.7" width="4" height="1.5" fill="#5060e0"/>
<rect x="1789" y="217.7" width="3" height="1.5" fill="#e05050"/>
<rect x="1779" y="220.0" width="5" height="1.5" fill="#5060e0"/>
<rect x="1784" y="220.0" width="27" height="1.5" fill="#555"/>
<rect x="1783" y="221.9" width="4" height="1.5" fill="#5060e0"/>
<rect x="1789" y="221.9" width="11" height="1.5" fill="#e05050"/>
<rect x="1775" y="224.0" width="4" height="1.5" fill="#5060e0"/>
<rect x="1782" y="224.0" width="11" height="1.5" fill="#555"/>
<rect x="1775" y="225.7" width="4" height="1.5" fill="#5060e0"/>
<rect x="1779" y="228.0" width="5" height="1.5" fill="#5060e0"/>
<rect x="1784" y="228.0" width="23" height="1.5" fill="#555"/>
<rect x="1783" y="229.9" width="4" height="1.5" fill="#5060e0"/>
<rect x="1789" y="229.9" width="6" height="1.5" fill="#e05050"/>
<rect x="1779" y="232.0" width="5" height="1.5" fill="#5060e0"/>
<rect x="1784" y="232.0" width="21" height="1.5" fill="#555"/>
<rect x="1783" y="233.9" width="4" height="1.5" fill="#5060e0"/>
<rect x="1789" y="233.9" width="6" height="1.5" fill="#e05050"/>
<rect x="1775" y="236.0" width="4" height="1.5" fill="#5060e0"/>
<rect x="1782" y="236.0" width="8" height="1.5" fill="#555"/>
<rect x="1771" y="239.7" width="5" height="1.5" fill="#5060e0"/>
<rect x="1777" y="239.7" width="5" height="1.5" fill="#555"/>
<rect x="1773" y="241.9" width="20" height="1.5" fill="#555"/>
<rect x="1775" y="244.0" width="3" height="1.5" fill="#5060e0"/>
<rect x="1778" y="244.0" width="39" height="1.5" fill="#555"/>
<rect x="1767" y="247.8" width="3" height="1.5" fill="#555"/>
<rect x="1767" y="252.0" width="8" height="1.5" fill="#555"/>
<rect x="1775" y="252.0" width="3" height="1.5" fill="#5060e0"/>
<rect x="1771" y="255.8" width="6" height="1.5" fill="#5060e0"/>
<rect x="1775" y="259.7" width="5" height="1.5" fill="#5060e0"/>
<rect x="1779" y="261.9" width="14" height="1.5" fill="#5060e0"/>
<rect x="1793" y="261.9" width="9" height="1.5" fill="#e05050"/>
<rect x="1783" y="263.7" width="4" height="1.5" fill="#5060e0"/>
<rect x="1789" y="263.7" width="8" height="1.5" fill="#e05050"/>
<rect x="1779" y="266.0" width="5" height="1.5" fill="#5060e0"/>
<rect x="1784" y="266.0" width="8" height="1.5" fill="#555"/>
<rect x="1792" y="266.0" width="11" height="1.5" fill="#e05050"/>
<rect x="1783" y="267.9" width="4" height="1.5" fill="#5060e0"/>
<rect x="1789" y="267.9" width="3" height="1.5" fill="#e05050"/>
<rect x="1779" y="270.0" width="5" height="1.5" fill="#5060e0"/>
<rect x="1784" y="270.0" width="6" height="1.5" fill="#555"/>
<rect x="1797" y="270.0" width="10" height="1.5" fill="#555"/>
<rect x="1779" y="272.0" width="5" height="1.5" fill="#5060e0"/>
<rect x="1784" y="272.0" width="17" height="1.5" fill="#555"/>
<rect x="1805" y="272.0" width="17" height="1.5" fill="#555"/>
<rect x="1783" y="273.9" width="4" height="1.5" fill="#5060e0"/>
<rect x="1789" y="273.9" width="11" height="1.5" fill="#e05050"/>
<rect x="1779" y="276.0" width="5" height="1.5" fill="#5060e0"/>
<rect x="1784" y="276.0" width="11" height="1.5" fill="#555"/>
<rect x="1783" y="277.9" width="4" height="1.5" fill="#5060e0"/>
<rect x="1789" y="277.9" width="16" height="1.5" fill="#e05050"/>
<rect x="1779" y="280.0" width="5" height="1.5" fill="#5060e0"/>
<rect x="1784" y="280.0" width="27" height="1.5" fill="#555"/>
<rect x="1781" y="282.2" width="4" height="1.5" fill="#555"/>
<rect x="1787" y="286.0" width="34" height="1.5" fill="#555"/>
<rect x="1788" y="287.9" width="14" height="1.5" fill="#555"/>
<rect x="1781" y="291.5" width="3" height="1.5" fill="#555"/>
<rect x="1783" y="292.7" width="4" height="1.5" fill="#5060e0"/>
<rect x="1789" y="292.7" width="20" height="1.5" fill="#e05050"/>
<rect x="1775" y="295.0" width="4" height="1.5" fill="#5060e0"/>
<rect x="1782" y="295.0" width="12" height="1.5" fill="#555"/>
<rect x="1771" y="298.0" width="4" height="1.5" fill="#5060e0"/>
<rect x="1776" y="298.0" width="6" height="1.5" fill="#555"/>
<rect x="1767" y="301.5" width="2" height="1.5" fill="#555"/>
<rect x="1767" y="305.7" width="9" height="1.5" fill="#5060e0"/>
<rect x="1778" y="305.7" width="3" height="1.5" fill="#5060e0"/>
<rect x="1781" y="305.7" width="5" height="1.5" fill="#555"/>
</g>

<rect x="1880" y="145" width="13" height="168" fill="#c4c4c6"/>
<rect x="1880" y="192.5" width="13" height="3" fill="#5f6166"/>
</svg>
<div class="abs" style="left:0;top:0;width:1449px;height:38px;background:#fff;border-bottom:1px solid #e4e4e4"><div class="ln" style="top:2.5px">1</div><div class="cl" style="top:0.5px"><span class="k">with</span> issues <span class="k">as</span> <span class="b1">(</span></div><div class="ln" style="top:20.5px">13</div><div class="cl" style="top:18.5px">    <span class="c">/*</span></div></div>
<div class="abs" style="left:90.3px;top:199px;width:2px;height:18px;background:#111"></div>
<svg class="abs" style="left:85.5px;top:205.5px" width="9" height="19" viewBox="0 0 10 21"><path d="M1.5,1.5 Q5,1.5 5,4 V17 Q5,19.5 1.5,19.5 M8.5,1.5 Q5,1.5 5,4 M8.5,19.5 Q5,19.5 5,17 M3,10.5 H7" fill="none" stroke="#fff" stroke-width="3"/><path d="M1.5,1.5 Q5,1.5 5,4 V17 Q5,19.5 1.5,19.5 M8.5,1.5 Q5,1.5 5,4 M8.5,19.5 Q5,19.5 5,17 M3,10.5 H7" fill="none" stroke="#111" stroke-width="1.3"/></svg>
<div class="abs" style="left:92px;top:161.3px;width:80.5px;height:35px;background:#fff;border:1px solid #ececee;border-radius:6px"></div>
<div class="t" style="left:99.3px;top:172.8px;font-size:13px;color:#2b2f36">Edit</div>
<div class="abs" style="left:132.4px;top:166.5px;width:35px;height:25px;background:#eff0f2;border-radius:5px"></div>
<div class="t" style="left:137.5px;top:173px;font-size:12.5px;color:#71767e">&#8984; B</div>
 </div>
 <div id="tool" class="abs">
  <div class="btn" style="left:13px;width:143.6px"></div>
  <svg class="abs" style="left:23px;top:17px" width="13" height="13" viewBox="0 0 13 13" fill="none" stroke="#3b4048" stroke-width="1.2"><rect x="0.8" y="0.8" width="11.4" height="11.4" rx="1.5"/><rect x="0.8" y="0.8" width="11.4" height="3" fill="#3b4048"/><path d="M0.8,6.8 H12.2 M0.8,9.5 H12.2 M6.5,4 V12.2"/></svg>
  <div class="t" style="left:44.3px;top:16px;font-size:13px;color:#2f343b">Preview Selection</div>
  <div class="btn" style="left:164.8px;width:146px"></div>
  <svg class="abs" style="left:174px;top:17px" width="14" height="12" viewBox="0 0 14 12" fill="none" stroke="#4b5058" stroke-width="1.2" stroke-linecap="round"><path d="M3.5,3 L0.8,6 L3.5,9 M10.5,3 L13.2,6 L10.5,9 M8,1.5 L6,10.5"/></svg>
  <div class="t" style="left:196px;top:16px;font-size:13px;color:#2f343b">Compile Selection</div>
  <div class="btn" style="left:319px;width:100.6px"></div>
  <svg class="abs" style="left:327.5px;top:16px" width="15" height="15" viewBox="0 0 24 24" fill="none" stroke="#3b4048" stroke-width="2" stroke-linecap="round" stroke-linejoin="round"><path d="M14.7 6.3a1 1 0 0 0 0 1.4l1.6 1.6a1 1 0 0 0 1.4 0l3.77-3.77a6 6 0 0 1-7.94 7.94l-6.91 6.91a2.12 2.12 0 0 1-3-3l6.91-6.91a6 6 0 0 1 7.94-7.94l-3.76 3.76z"/></svg>
  <div class="t" style="left:350.7px;top:16px;font-size:13px;color:#2f343b">Build</div>
  <svg class="abs" style="left:400.5px;top:19.5px" width="9" height="7" viewBox="0 0 9 7" fill="none" stroke="#4b5058" stroke-width="1.5"><path d="M1,1.5 L4.5,5 L8,1.5"/></svg>
  <div class="btn" style="left:427.8px;width:71.2px"></div>
  <div class="t" style="left:437.4px;top:16px;font-size:13px;color:#2f343b">Lint</div>
  <svg class="abs" style="left:478.5px;top:19.5px" width="9" height="7" viewBox="0 0 9 7" fill="none" stroke="#4b5058" stroke-width="1.5"><path d="M1,1.5 L4.5,5 L8,1.5"/></svg>
  <div class="abs" style="left:510.5px;top:0;width:1px;height:47px;background:#e6e8eb"></div>
  <div class="t" style="left:544.2px;top:16.5px;font-size:13px;color:#3b4048">Results</div>
  <div class="t" style="left:618.2px;top:16.5px;font-size:13px;color:#3b4048">Code quality</div>
  <div class="t" style="left:723.7px;top:16.5px;font-size:13px;color:#3b4048">Compiled code</div>
  <div class="t" style="left:843.8px;top:16.5px;font-size:13px;color:#2f343b">Lineage</div>
  <div class="abs" style="left:828px;top:44px;width:77px;height:2px;background:#50565e;border-radius:1px"></div>
  <div class="btn" style="left:1438.3px;width:132.7px"></div>
  <svg class="abs" style="left:1449px;top:15px" width="16" height="16" viewBox="0 0 16 16" fill="none" stroke="#4b5058" stroke-width="1.2" stroke-linejoin="round"><path d="M9,1.5 H1.5 V11 H5.5 L7,13.5 L8.5,11 H13.5 V8"/><path d="M12.5,1 L13,3 L15,3.5 L13,4 L12.5,6 L12,4 L10,3.5 L12,3 Z M9.3,5.5 L9.6,6.7 L10.8,7 L9.6,7.3 L9.3,8.5 L9,7.3 L7.8,7 L9,6.7 Z" fill="#ef8f9a" stroke="#ef8f9a" stroke-width="0.6"/></svg>
  <div class="t" style="left:1472.3px;top:16.8px;font-size:13.5px;color:#2f343b">dbt Copilot</div>
  <svg class="abs" style="left:1548px;top:19.5px" width="9" height="7" viewBox="0 0 9 7" fill="none" stroke="#4b5058" stroke-width="1.5"><path d="M1,1.5 L4.5,5 L8,1.5"/></svg>
 </div>
 <div id="graph" class="abs">
<svg class="abs" style="left:0;top:0" width="1583" height="200" fill="none" stroke="#a3a6ab" stroke-width="1.3"><path d="M500.0,26.0 C529.2,26.0 529.2,68.5 558.5,68.5"/><path d="M457.0,78.3 C507.8,78.3 507.8,68.5 558.5,68.5"/><path d="M477.0,130.4 C517.8,130.4 517.8,68.5 558.5,68.5"/><path d="M728.5,68.5 C821.8,68.5 821.8,122.5 915.0,122.5"/><path d="M728.5,70.0 C741.6,70.0 741.6,137.7 754.8,137.7"/><path d="M663.5,121.5 C709.1,121.5 709.1,137.7 754.8,137.7"/><path d="M682.5,173.4 C718.6,173.4 718.6,137.7 754.8,137.7"/><path d="M883.8,137.7 C899.4,137.7 899.4,122.5 915.0,122.5"/><path d="M1018.0,122.0 C1052.2,122.0 1052.2,104.3 1086.4,104.3"/><path d="M554.5,66.5 L558.5,68.5 L554.5,70.5 Z M750.8,135.7 L754.8,137.7 L750.8,139.7 Z M911,120.5 L915,122.5 L911,124.5 Z M1082.4,102.3 L1086.4,104.3 L1082.4,106.3 Z" fill="#3a3e44" stroke="none"/></svg>
<div class="node" style="left:352.0px;top:6.0px;width:148.0px"><span>stg_github__issue_...</span></div>
<div class="node" style="left:352.0px;top:58.3px;width:105.0px"><span>stg_github_...</span></div>
<div class="node" style="left:352.0px;top:110.4px;width:125.0px"><span>stg_github__iss...</span></div>
<div class="node" style="left:558.5px;top:48.5px;width:170.0px"><span>int_github__issue_labe...</span></div>
<div class="node" style="left:558.5px;top:101.5px;width:105.0px"><span>stg_github_...</span></div>
<div class="node" style="left:558.5px;top:153.4px;width:124.0px"><span>stg_github__re...</span></div>
<div class="node" style="left:754.8px;top:117.7px;width:129.0px"><span>int_github__iss...</span></div>
<div class="node" style="left:1086.4px;top:84.3px;width:146.0px"><span>fct_github_issue_s...</span></div>
<div class="node" style="left:915px;top:99.5px;width:103px;height:43.5px;border:2px solid #2e3844;box-shadow:0 8px 14px rgba(0,0,0,0.13)"><span style="left:8px;top:10.5px">fct_github_...</span></div>

  <div class="abs" style="left:1158.5px;top:25.2px;width:296px;height:40px;border:1.5px solid #a4a8ae;border-radius:6px;background:#fff"></div>
  <div class="abs" style="left:1350px;top:26px;width:1px;height:38px;background:#a4a8ae"></div>
  <div class="t" style="left:1170.8px;top:38.5px;font-size:13px;color:#3b4048">2+fct_github_issues+2</div>
  <div class="t" style="left:1362px;top:38.5px;font-size:13px;color:#2f343b">Update Graph</div>
  <div class="abs" style="left:1471.2px;top:25.2px;width:39.5px;height:40px;border:1.5px solid #a4a8ae;border-radius:6px;background:#fff"></div>
  <svg class="abs" style="left:1482px;top:37px" width="17" height="17" viewBox="0 0 17 17" fill="none" stroke="#3b4048" stroke-width="1.5"><path d="M1,5 V1 H5 M12,1 H16 V5 M16,12 V16 H12 M5,16 H1 V12"/></svg>
  <div class="abs" style="left:1519.2px;top:25.2px;width:39.5px;height:40px;border:1.5px solid #a4a8ae;border-radius:6px;background:#fff"></div>
  <svg class="abs" style="left:1530px;top:36px" width="18" height="18" viewBox="0 0 18 18" fill="none" stroke="#3b4048" stroke-width="1.5" stroke-linecap="round"><path d="M14.5,8.5 A5.8,5.8 0 1 1 11.5,3.4"/><path d="M10,1.2 L13.3,3.3 L11.3,6.5" stroke-linejoin="round"/></svg>

 </div>
 <div class="abs" style="left:300px;top:990px;width:1583px;height:5px;background:linear-gradient(rgba(230,232,236,0),#e4e6ea)"></div>
 <div class="abs" style="z-index:3;left:300px;top:0;width:1px;height:995px;background:#e4e6ea"></div>
 <div id="status" class="abs">
  <svg class="abs" style="left:16px;top:15.0px" width="9" height="6" viewBox="0 0 9 6" fill="none" stroke="#4b5058" stroke-width="1.3"><path d="M1,5 L4.5,1.5 L8,5"/></svg>
  <div class="abs" style="left:39.5px;top:0;width:1px;height:40px;background:#eceef1"></div>
  <div class="t" style="left:56px;top:13.0px;font-size:13.3px;color:#8a8f97">dbt build --select &lt;model_name&gt;</div>
  <div class="abs" style="left:1460px;top:9.8px;width:39.4px;height:20px;border:1.5px solid #8f949b;border-radius:10px;background:#fff"></div>
  <div class="abs" style="left:1463px;top:12.5px;width:14.5px;height:14.5px;border-radius:50%;background:#363c47"></div>
  <div class="t" style="left:1511.6px;top:13.5px;font-size:12.7px;font-weight:bold;color:#4a4f57">Defer to staging/production</div>
  <svg class="abs" style="left:1682px;top:12.5px" width="12" height="12" viewBox="0 0 12 12" fill="none" stroke="#a7abb1" stroke-width="1"><circle cx="6" cy="6" r="5.3"/><path d="M4.4,4.6 A1.6,1.6 0 1 1 6.5,6.1 Q6,6.4 6,7.3 M6,8.6 V9.4"/></svg>
  <div class="abs" style="left:1706px;top:7.7px;width:75px;height:24.6px;border-radius:12.3px;background:#d1f4df"></div>
  <svg class="abs" style="left:1717px;top:13.5px" width="13" height="13" viewBox="0 0 13 13" fill="none" stroke="#2b7f77" stroke-width="1.2"><circle cx="6.5" cy="6.5" r="5.6"/></svg>
  <div class="t" style="left:1736.5px;top:14.5px;font-size:11.8px;color:#2b7f77">Ready</div>
  <div class="abs" style="left:1788.8px;top:4.0px;width:34px;height:31.6px;border:1.5px solid #8f949b;border-radius:6px;background:#fff"></div>
  <div class="abs" style="left:1799px;top:18.5px;width:3px;height:3px;border-radius:50%;background:#2f343b;box-shadow:5px 0 0 #2f343b,10px 0 0 #2f343b"></div>
 </div>
</div>
</body></html>
